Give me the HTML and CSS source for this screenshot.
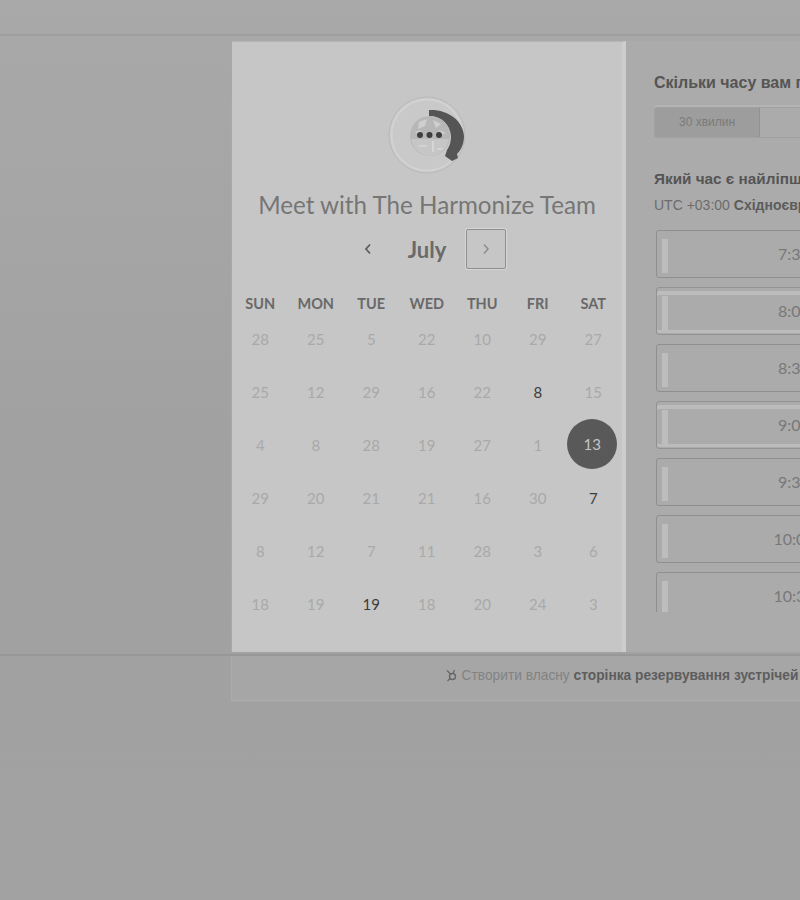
FILE: index.html
```html
<!DOCTYPE html>
<html lang="en">
<head>
    <meta charset="UTF-8">
    <meta name="viewport" content="width=device-width, initial-scale=1.0">
    <title>Meet with The Harmonize Team</title>
    <link rel="stylesheet" href="styles.css">
</head>
<body>

<div class="frame">
    <div class="booking">
        <div class="calendar-card">
            <svg class="logo" viewBox="7 7 78 78" width="78" height="78">
                <circle cx="46" cy="46" r="38" fill="#c9c9c9" stroke="#b9b9b9" stroke-width="1"/>
                <circle cx="46" cy="46" r="35.500" fill="none" stroke="#d2d2d2" stroke-width="2"/>
                <path d="M48 21 C66 20 82 31 83 47 C83 55 80 61 76 65 L77 69 L71 72 L64 67 L66 61 C69 57 70 52 70 47 C69 35 60 27 48 27 Z" fill="#555"/>
                <circle cx="49" cy="47" r="20" fill="#b7b7b7"/>
                <path d="M30 50 H68 C66 60 58 67 49 67 C40 67 32 60 30 50 Z" fill="#c6c6c6"/>
                <path d="M38 33 L46 30 L44 37 L37 40 Z M52 31 L60 35 L55 39 Z M34 43 L40 41 L38 47 Z M58 41 L65 44 L60 46 Z" fill="#cfcfcf"/>
                <path d="M38 57 H46 M52 52 V63 M56 60 H62" stroke="#e0e0e0" stroke-width="1.200" fill="none"/>
                <circle cx="39" cy="46" r="3" fill="#3f3f3f"/>
                <circle cx="48.500" cy="46" r="3" fill="#3f3f3f"/>
                <circle cx="58" cy="46" r="3" fill="#3f3f3f"/>
            </svg>

            <h1 class="calendar-title">Meet with The Harmonize Team</h1>

            <div class="month-nav">
                <button class="nav-btn">
                    <svg width="10" height="12" viewBox="0 0 10 12"><path d="M7 1.500 L3 6 L7 10.500" fill="none" stroke="#5f5f5f" stroke-width="1.800"/></svg>
                </button>
                <div class="month-name">July</div>
                <button class="nav-btn nav-btn-active">
                    <svg width="10" height="12" viewBox="0 0 10 12"><path d="M3 1.500 L7 6 L3 10.500" fill="none" stroke="#8d8d8d" stroke-width="1.500"/></svg>
                </button>
            </div>

            <div class="weekdays">
                <div>SUN</div><div>MON</div><div>TUE</div><div>WED</div><div>THU</div><div>FRI</div><div>SAT</div>
            </div>

            <div class="dates">
                <div>28</div><div>25</div><div>5</div><div>22</div><div>10</div><div>29</div><div>27</div>
                <div>25</div><div>12</div><div>29</div><div>16</div><div>22</div><div class="open">8</div><div>15</div>
                <div>4</div><div>8</div><div>28</div><div>19</div><div>27</div><div>1</div><div class="selected"><span>13</span></div>
                <div>29</div><div>20</div><div>21</div><div>21</div><div>16</div><div>30</div><div class="open">7</div>
                <div>8</div><div>12</div><div>7</div><div>11</div><div>28</div><div>3</div><div>6</div>
                <div>18</div><div>19</div><div class="open">19</div><div>18</div><div>20</div><div>24</div><div>3</div>
            </div>
        </div>

        <div class="times-panel">
            <h4 class="panel-heading">Скільки часу вам потрібно?</h4>
            <div class="duration-tabs">
                <div class="duration-tab duration-tab-active">30 хвилин</div>
                <div class="duration-tab">1 година</div>
            </div>

            <h4 class="panel-heading panel-heading-time">Який час є найліпшим?</h4>
            <div class="timezone">UTC +03:00 <b>Східноєвропейський час</b></div>

            <div class="time-list">
                <div class="time-row">7:30</div>
                <div class="time-row time-row-striped">8:00</div>
                <div class="time-row">8:30</div>
                <div class="time-row time-row-striped">9:00</div>
                <div class="time-row">9:30</div>
                <div class="time-row">10:00</div>
                <div class="time-row">10:30</div>
            </div>
        </div>
    </div>
</div>

<div class="footer-bar">
    <svg class="sprocket" width="13" height="14" viewBox="0 0 13 14">
        <circle cx="7.500" cy="8.500" r="3" fill="none" stroke="#666" stroke-width="1.400"/>
        <path d="M5.500 6 L2 2.500 M8 5.500 L9.500 2 M5 10.500 L2.500 13" stroke="#666" stroke-width="1.200" fill="none"/>
    </svg>
    <span>Створити власну <b>сторінка резервування зустрічей</b></span>
</div>

</body>
</html>
```

FILE: styles.css
```css
html, body {
    height: 100%;
    overflow: hidden;
}

body {
    margin: 0;
    background: linear-gradient(#a9a9a9, #a1a1a1 50%, #a2a2a2);
    font-family: 'Lato', sans-serif;
}

.frame {
    margin-top: 34px;
    padding: 5px 0 2px 231px;
    border-top: 2px solid #9e9e9e;
    border-bottom: 2px solid #979797;
}

.booking {
    display: flex;
    width: 1000px;
    height: 611px;
}

.calendar-card {
    width: 395px;
    flex-shrink: 0;
    padding-top: 54px;
    box-sizing: border-box;
    background-color: #c6c6c6;
    border-left: 1px solid #a9a9a9;
    border-top: 1px solid #b4b4b4;
    border-right: 4px solid #cdcdcd;
    text-align: center;
}

.logo {
    display: block;
    margin: 0 auto;
}

.calendar-title {
    margin: 15px 0 0;
    font-size: 24.200px;
    line-height: 32px;
    font-weight: 400;
    color: #767676;
}

.month-nav {
    display: flex;
    justify-content: center;
    align-items: center;
    margin-top: 8px;
    height: 40px;
}

.nav-btn {
    width: 40px;
    height: 40px;
    padding: 0;
    background: transparent;
    border: 1px solid transparent;
    border-radius: 2px;
    display: flex;
    align-items: center;
    justify-content: center;
}

.nav-btn-active {
    border-color: #8f8f8f;
    box-shadow: 0 0 0 1px #d6d6d6;
}

.month-name {
    width: 78px;
    font-size: 22px;
    font-weight: 700;
    color: #6a6a6a;
}

.weekdays {
    display: grid;
    grid-template-columns: repeat(7, 55.500px);
    margin-top: 26px;
    padding-left: 0.500px;
    font-size: 14.500px;
    line-height: 17px;
    font-weight: 700;
    color: #696969;
}

.dates {
    display: grid;
    grid-template-columns: repeat(7, 55.500px);
    grid-auto-rows: 53px;
    padding-left: 0.500px;
    font-size: 15px;
    color: #a9a9a9;
}

.dates div {
    display: flex;
    align-items: center;
    justify-content: center;
}

.dates .open {
    color: #3d3d3d;
}

.dates .selected span {
    width: 50px;
    height: 50px;
    margin: -2px 0 0 -2px;
    flex-shrink: 0;
    border-radius: 50%;
    background-color: #595959;
    color: #c4c4c4;
    display: flex;
    align-items: center;
    justify-content: center;
}

.times-panel {
    flex: 1;
    padding: 32px 0 0 28px;
    background-color: #ababab;
    overflow: hidden;
    font-family: 'Liberation Sans', sans-serif;
}

.panel-heading {
    margin: 0;
    font-size: 16px;
    line-height: 20px;
    color: #555;
}

.duration-tabs {
    display: flex;
    margin-top: 14px;
    width: 320px;
    height: 31px;
    border-radius: 3px;
    border: 1px solid #a0a0a0;
    box-sizing: border-box;
    box-shadow: 0 -2px 0 #b4b4b4;
}

.duration-tab {
    font-size: 12px;
    line-height: 29px;
    text-align: center;
    color: #7a7a7a;
    flex: 1;
}

.duration-tab-active {
    flex: none;
    width: 104px;
    background-color: #9d9d9d;
    border-right: 1px solid #929292;
}

.panel-heading-time {
    margin-top: 31px;
    font-size: 15.300px;
}

.timezone {
    margin-top: 6px;
    font-size: 14px;
    line-height: 20px;
    color: #6c6c6c;
}

.timezone b {
    color: #5c5c5c;
}

.time-list {
    display: flex;
    flex-direction: column;
    gap: 9px;
    margin-top: 15px;
    margin-left: 2px;
    height: 382px;
    overflow: hidden;
}

.time-row {
    position: relative;
    flex-shrink: 0;
    box-sizing: border-box;
    width: 276px;
    height: 48px;
    border: 1px solid #8f8f8f;
    border-radius: 3px;
    font-size: 16px;
    line-height: 46px;
    text-align: center;
    color: #787878;
    font-family: 'Lato', sans-serif;
}

/* pale bar on the inner left edge of each row */
.time-row::before {
    content: "";
    position: absolute;
    left: 5px;
    top: 8px;
    bottom: 4px;
    width: 6px;
    background-color: #bdbdbd;
}

.time-row-striped {
    border-color: #929292;
    box-shadow: inset 0 3px 0 #ababab, inset 0 7px 0 #bcbcbc, inset 0 -1px 0 #ababab, inset 0 -4px 0 #bcbcbc;
}

.footer-bar {
    display: flex;
    align-items: center;
    justify-content: center;
    gap: 4px;
    box-sizing: border-box;
    width: 780px;
    height: 45px;
    margin-left: 231px;
    padding-bottom: 6px;
    background-color: #a6a6a6;
    border-left: 1px solid #ababab;
    border-bottom: 1px solid #adadad;
    font-family: 'Liberation Sans', sans-serif;
    font-size: 13.750px;
    color: #828282;
    white-space: nowrap;
}

.footer-bar b {
    color: #5d5d5d;
}
```
